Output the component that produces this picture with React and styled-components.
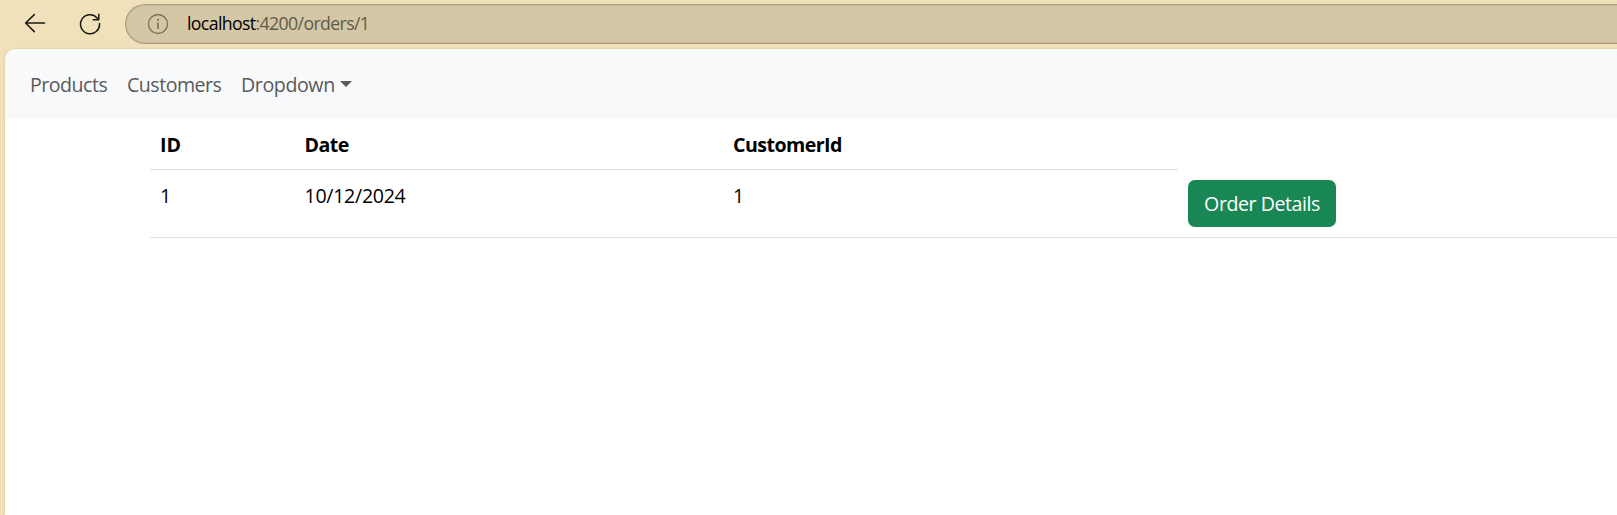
import React from "react";
import styled, { createGlobalStyle } from "styled-components";

const GlobalStyle = createGlobalStyle`
  * { box-sizing: border-box; }
  body {
    margin: 0;
    overflow: hidden;
    background: #f0e1bb;
    color: #000;
    font: 400 19.6px/30px "Segoe UI", "Open Sans", "Noto Sans", sans-serif;
  }
`;

const Browser = styled.div`
  height: 100vh;
  display: flex;
  flex-direction: column;
  overflow: hidden;
`;

const Toolbar = styled.header`
  flex: none;
  height: 49px;
  display: flex;
  align-items: flex-start;
  padding: 4px 0 0 20px;
`;

const ToolButton = styled.button`
  width: 30px;
  height: 40px;
  margin-right: ${(p) => p.$gap}px;
  padding: 0;
  border: 0;
  background: none;
  display: flex;
  align-items: center;
  justify-content: center;
  color: #1b1914;
`;

const AddressBar = styled.div`
  flex: 1;
  height: 40px;
  margin-right: -4px;
  display: flex;
  align-items: center;
  padding-left: 21px;
  border: 1px solid #aa9f84;
  border-right: 0;
  border-radius: 20px 0 0 20px;
  background: #d4c7a6;
  box-shadow: inset 0 0 1px 1px rgba(170, 159, 132, 0.3);
`;

const Url = styled.span`
  margin-left: 18px;
  padding-bottom: 2px;
  font-size: 17.7px;
  line-height: 24px;
  letter-spacing: -0.62px;
  color: #5f5a4c;
`;

const Host = styled.span`
  color: #000;
`;

const Page = styled.main`
  flex: 1;
  margin-left: 5px;
  overflow: hidden;
  border-radius: 10px 0 0 0;
  background: #fff;
  box-shadow: 0 0 2px rgba(190, 150, 90, 0.6);
`;

const Navbar = styled.nav`
  height: 70px;
  display: flex;
  align-items: center;
  gap: 20px;
  padding: 2px 0 0 25px;
  background: #f8f9fa;
`;

const NavLink = styled.a`
  display: flex;
  align-items: center;
  width: ${(p) => p.$width}px;
  color: #595a5b;
  letter-spacing: ${(p) => p.$track}px;
  white-space: nowrap;
`;

const Caret = styled.span`
  margin: 0 0 2px auto;
  border: 6px solid transparent;
  border-top-color: currentColor;
  border-bottom: 0;
`;

const Table = styled.table`
  width: 1620px;
  margin-left: 145px;
  border-collapse: separate;
  border-spacing: 0;
  table-layout: fixed;
`;

const Column = styled.col`
  width: ${(p) => p.$width};
`;

const HeadCell = styled.th`
  padding: 11px 10px 9px;
  border-bottom: 1px solid #dfdfdf;
  text-align: left;
  font-weight: 700;
  letter-spacing: ${(p) => p.$track}px;
`;

const Cell = styled.td`
  height: 68px;
  padding: ${(p) => (p.$action ? 10 : 11)}px 10px 10px;
  border-bottom: 1px solid #dfdfdf;
  vertical-align: top;
  letter-spacing: -0.3px;
`;

const DetailsButton = styled.button`
  display: block;
  width: 148px;
  height: 47px;
  padding: 0;
  border: 0;
  border-radius: 7px;
  background: #198754;
  color: #fff;
  font: inherit;
  letter-spacing: -0.45px;
  white-space: nowrap;
`;

function BackIcon() {
  return (
    <svg width="22" height="22" viewBox="0 0 22 22" fill="none" stroke="currentColor" strokeWidth="1.5" strokeLinecap="round" strokeLinejoin="round">
      <path d="M20.5 10H1.8M10.3 1.6L1.6 10l8.7 8.6" />
    </svg>
  );
}

function ReloadIcon() {
  return (
    <svg width="22" height="22" viewBox="0 0 22 22" fill="none" stroke="currentColor" strokeWidth="1.5" strokeLinecap="round" strokeLinejoin="round">
      <path d="M20.5 10.5a9.5 9.5 0 1 1-2.4-5.6l1.5 1.7M19.8 1.2v5.6h-5.6" />
    </svg>
  );
}

function InfoIcon() {
  return (
    <svg width="22" height="22" viewBox="0 0 22 22" fill="none" stroke="#777160" strokeWidth="1.3">
      <circle cx="11" cy="11" r="9.5" />
      <path d="M11 9.6v6.4" strokeWidth="1.7" />
      <circle cx="11" cy="6.8" r="1.1" fill="#777160" stroke="none" />
    </svg>
  );
}

export default function App() {
  return (
    <Browser>
      <GlobalStyle />
      <Toolbar>
        <ToolButton $gap={25} aria-label="Back"><BackIcon /></ToolButton>
        <ToolButton $gap={20} aria-label="Reload"><ReloadIcon /></ToolButton>
        <AddressBar>
          <InfoIcon />
          <Url><Host>localhost</Host>:4200/orders/1</Url>
        </AddressBar>
      </Toolbar>
      <Page>
        <Navbar>
          <NavLink $width={77} $track={-0.5}>Products</NavLink>
          <NavLink $width={94} $track={-0.5}>Customers</NavLink>
          <NavLink $width={111} $track={-0.4}>Dropdown<Caret /></NavLink>
        </Navbar>
        <Table>
          <colgroup>
            <Column $width="144.5px" />
            <Column $width="428.5px" />
            <Column $width="455px" />
            <Column />
          </colgroup>
          <thead>
            <tr>
              <HeadCell $track={0}>ID</HeadCell>
              <HeadCell $track={-0.55}>Date</HeadCell>
              <HeadCell $track={-0.55}>CustomerId</HeadCell>
            </tr>
          </thead>
          <tbody>
            <tr>
              <Cell>1</Cell>
              <Cell>10/12/2024</Cell>
              <Cell>1</Cell>
              <Cell $action><DetailsButton>Order Details</DetailsButton></Cell>
            </tr>
          </tbody>
        </Table>
      </Page>
    </Browser>
  );
}
